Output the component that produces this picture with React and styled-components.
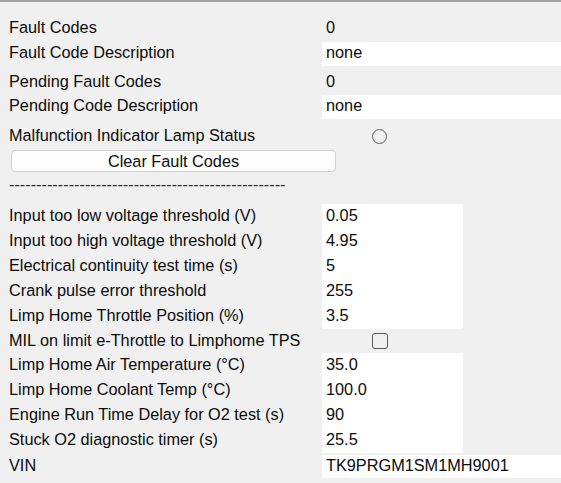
import React from 'react';
import styled, { createGlobalStyle } from 'styled-components';

const Global = createGlobalStyle`
  html, body { margin: 0; padding: 0; background: #f0f0f0; }
  body {
    font-family: "Liberation Sans", Arial, sans-serif;
    font-size: 16.3px;
    color: #0c0c0c;
  }
`;

const Panel = styled.div`
  width: 561px;
  height: 483px;
  box-sizing: border-box;
  overflow: hidden;
  border-top: 2px solid #a2a2a2;
  padding-left: 9px;
  display: flex;
  flex-direction: column;
`;

const Row = styled.div`
  flex: none;
  display: grid;
  grid-template-columns: 313px ${p => (p.$w ? `${p.$w}px` : '1fr')};
  height: ${p => p.$h}px;
  margin-top: ${p => p.$mt || 0}px;
  line-height: 18px;
`;

const Label = styled.div`
  padding-top: ${p => p.$pt}px;
  white-space: nowrap;
`;

const Value = styled.div`
  padding: ${p => p.$pt}px 0 0 4px;
  background: ${p => (p.$field ? '#ffffff' : 'transparent')};
  white-space: nowrap;
`;

const Control = styled.div`
  display: flex;
  align-items: center;
  padding-left: 50px;
  padding-bottom: ${p => p.$pb || 0}px;
`;

const Radio = styled.span`
  width: 15px;
  height: 15px;
  box-sizing: border-box;
  border: 1.5px solid #5c5c5c;
  border-radius: 50%;
`;

const Check = styled.span`
  width: 16px;
  height: 16px;
  box-sizing: border-box;
  border: 1.5px solid #5c5c5c;
  border-radius: 3px;
`;

const Button = styled.button`
  flex: none;
  margin: 1px 0 0 2px;
  width: 325px;
  height: 22px;
  padding: 0;
  box-sizing: border-box;
  background: #fdfdfd;
  border: 1px solid #cfcfcf;
  border-radius: 4px;
  font-family: inherit;
  font-size: 16.3px;
  color: #0c0c0c;
  line-height: 18px;
`;

const Dashes = styled.div`
  flex: none;
  margin-top: 2px;
  height: 24px;
  padding-top: 1px;
  box-sizing: border-box;
  line-height: 18px;
  white-space: nowrap;
  color: #333;
`;

const upper = [
  { label: 'Fault Codes', value: '0', mt: 15, h: 24, pt: 1 },
  { label: 'Fault Code Description', value: 'none', field: true, mt: 1, h: 24, pt: 1 },
  { label: 'Pending Fault Codes', value: '0', mt: 5, h: 24, pt: 1 },
  { label: 'Pending Code Description', value: 'none', field: true, mt: 0, h: 24, pt: 1 },
];

const group1 = [
  ['Input too low voltage threshold (V)', '0.05'],
  ['Input too high voltage threshold (V)', '4.95'],
  ['Electrical continuity test time (s)', '5'],
  ['Crank pulse error threshold', '255'],
  ['Limp Home Throttle Position (%)', '3.5'],
];

const group2 = [
  ['Limp Home Air Temperature (°C)', '35.0'],
  ['Limp Home Coolant Temp (°C)', '100.0'],
  ['Engine Run Time Delay for O2 test (s)', '90'],
  ['Stuck O2 diagnostic timer (s)', '25.5'],
];

const FieldRows = ({ rows, firstMt }) =>
  rows.map(([label, value], i) => (
    <Row key={label} $h={25} $w={141} $mt={i === 0 ? firstMt : 0}>
      <Label $pt={2}>{label}</Label>
      <Value $pt={2} $field>{value}</Value>
    </Row>
  ));

export default function App() {
  return (
    <>
      <Global />
      <Panel>
        {upper.map(r => (
          <Row key={r.label} $h={r.h} $mt={r.mt}>
            <Label $pt={r.pt}>{r.label}</Label>
            <Value $pt={r.pt} $field={r.field}>{r.value}</Value>
          </Row>
        ))}
        <Row $h={24} $mt={6}>
          <Label $pt={1}>Malfunction Indicator Lamp Status</Label>
          <Control $pb={2}><Radio /></Control>
        </Row>
        <Button>Clear Fault Codes</Button>
        <Dashes>{'-'.repeat(51)}</Dashes>
        <FieldRows rows={group1} firstMt={6} />
        <Row $h={24}>
          <Label $pt={2}>MIL on limit e-Throttle to Limphome TPS</Label>
          <Control><Check /></Control>
        </Row>
        <FieldRows rows={group2} firstMt={0} />
        <Row $h={23} $mt={2}>
          <Label $pt={1}>VIN</Label>
          <Value $pt={1} $field>TK9PRGM1SM1MH9001</Value>
        </Row>
      </Panel>
    </>
  );
}
